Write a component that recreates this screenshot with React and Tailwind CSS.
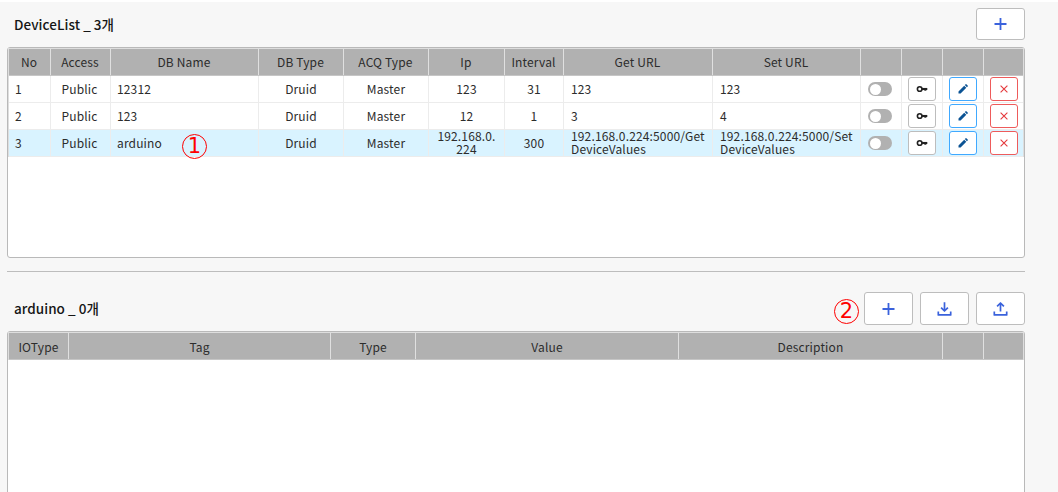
const COLS =
  "grid grid-cols-[42px_60px_148px_85px_85px_76px_59px_149px_148px_41px_41px_41px_39px]";
const TAG_COLS = "grid grid-cols-[60px_262px_85px_263px_264px_41px_39px]";

const devices = [
  { no: 1, name: "12312", ip: "123", interval: 31, get: "123", set: "123" },
  { no: 2, name: "123", ip: "12", interval: 1, get: "3", set: "4" },
  {
    no: 3,
    name: "arduino",
    ip: "192.168.0.224",
    interval: 300,
    get: "192.168.0.224:5000/GetDeviceValues",
    set: "192.168.0.224:5000/SetDeviceValues",
    selected: true,
  },
];

function PlusIcon() {
  return (
    <svg width="16" height="16" viewBox="0 0 16 16" fill="none" stroke="#3a62dc" strokeWidth="1.8">
      <path d="M7.5 2v12M1.5 8h12" />
    </svg>
  );
}

function DownloadIcon() {
  return (
    <svg width="16" height="16" viewBox="0 0 16 16" fill="none" stroke="#3a62dc" strokeWidth="1.7">
      <path d="M7.5 1.2v8.6M4.1 6.6L7.5 10l3.4-3.4M1.3 10.5v3.4h12.4v-3.4" strokeLinejoin="round" />
    </svg>
  );
}

function UploadIcon() {
  return (
    <svg width="16" height="16" viewBox="0 0 16 16" fill="none" stroke="#3a62dc" strokeWidth="1.7">
      <path d="M7.5 10.5V2M4.1 5.4L7.5 2l3.4 3.4M1.3 10.5v3.4h12.4v-3.4" strokeLinejoin="round" />
    </svg>
  );
}

function KeyIcon() {
  return (
    <svg width="12" height="8" viewBox="0 0 12 8" fill="none" stroke="#222">
      <circle cx="3.7" cy="4" r="2.3" strokeWidth="1.6" />
      <path d="M5.8 4H11.3" strokeWidth="2.1" />
      <path d="M9.3 4v1.7" strokeWidth="2" />
    </svg>
  );
}

function PencilIcon() {
  return (
    <svg width="10" height="10" viewBox="0 0 10 10" fill="#0b5394">
      <path d="M0.5 9.5V7.4L6.2 1.7L8.3 3.8L2.6 9.5ZM6.8 1.1L7.6 0.3Q8 0 8.4 0.3L9.7 1.6Q10 2 9.7 2.4L8.9 3.2Z" />
    </svg>
  );
}

function CloseIcon() {
  return (
    <svg width="8" height="8" viewBox="0 0 8 8" stroke="#e5393c" strokeWidth="1.1">
      <path d="M0.6 0.6l6.8 6.8M7.4 0.6L0.6 7.4" />
    </svg>
  );
}

function ToolButton({ height = "h-[33px]", children }) {
  return (
    <button
      className={`flex w-[49px] items-center justify-center rounded-[3px] border border-[#bdbdbd] bg-white ${height}`}
    >
      {children}
    </button>
  );
}

function RowButton({ color, children }) {
  return (
    <button
      className={`flex h-6 w-7 shrink-0 items-center justify-center rounded-[3px] border bg-white ${color}`}
    >
      {children}
    </button>
  );
}

function Head({ cols, labels, className = "" }) {
  return (
    <div className={`${cols} h-[27px] border-b border-[#c6c6c6] bg-[#b1b1b1]`}>
      {labels.map((label, i) => (
        <div
          key={i}
          className={`flex items-center justify-center border-r border-[#e0e0e0] last:border-r-0 ${className}`}
        >
          {label}
        </div>
      ))}
    </div>
  );
}

const ALIGN = {
  center: "justify-center px-[6px] pb-[2px] text-center",
  access: "justify-center pr-[2px] pb-[2px]",
  left: "justify-start pb-[2px] pl-[6px]",
  url: "justify-start pr-[5px] pb-[2px] pl-[7px]",
  control: "justify-center",
};

function Cell({ align = "center", children }) {
  return (
    <div
      className={`flex h-[27px] min-w-0 items-center border-r border-b border-[#ececec] leading-[13px] break-all last:border-r-0 ${ALIGN[align]}`}
    >
      {children}
    </div>
  );
}

function Marker({ children, className }) {
  return (
    <span
      className={`absolute flex h-[25px] w-[25px] items-center justify-center rounded-full border border-[#f00] font-['DejaVu_Sans',sans-serif] text-[21px] leading-none tracking-normal text-[#f00] ${className}`}
    >
      {children}
    </span>
  );
}

export default function App() {
  return (
    <main className="h-[492px] w-[1058px] overflow-hidden border-t-2 border-white bg-[#f7f7f7] pr-[33px] pl-[7px] font-['Noto_Sans_CJK_KR',sans-serif] text-[12px] tracking-[0.15px] text-[#2c2c2c]">
      <div className="mb-px flex h-[44px] items-center justify-between">
        <h1 className="pl-[7px] text-[13.5px] font-medium tracking-[0.05px] text-[#151515]">DeviceList _ 3개</h1>
        <ToolButton height="h-[32px]">
          <PlusIcon />
        </ToolButton>
      </div>

      <section className="h-[211px] rounded-[3px] border border-[#b9b9b9] bg-white">
        <div className="border-x border-t border-[#dedede]">
          <Head
            cols={COLS}
            labels={["No", "Access", "DB Name", "DB Type", "ACQ Type", "Ip", "Interval", "Get URL", "Set URL", "", "", "", ""]}
            className="pr-px pb-px"
          />
          {devices.map((d) => (
            <div key={d.no} className={`${COLS} ${d.selected ? "bg-[#d9f3ff]" : "bg-white"}`}>
              <Cell align="left">{d.no}</Cell>
              <Cell align="access">Public</Cell>
              <Cell align="left">
                <span className="relative">
                  {d.name}
                  {d.selected && <Marker className="top-[-2px] left-[65px]">1</Marker>}
                </span>
              </Cell>
              <Cell>Druid</Cell>
              <Cell>Master</Cell>
              <Cell>{d.ip}</Cell>
              <Cell>{d.interval}</Cell>
              <Cell align="url">{d.get}</Cell>
              <Cell align="url">{d.set}</Cell>
              <Cell align="control">
                <span className="mr-[2px] flex h-[14px] w-6 shrink-0 items-center rounded-full bg-[#b1b1b1] pl-[2px]">
                  <span className="h-[11px] w-[11px] rounded-full bg-white" />
                </span>
              </Cell>
              <Cell align="control">
                <RowButton color="border-[#bdbdbd]">
                  <KeyIcon />
                </RowButton>
              </Cell>
              <Cell align="control">
                <RowButton color="border-[#40a9ff]">
                  <PencilIcon />
                </RowButton>
              </Cell>
              <Cell align="control">
                <RowButton color="border-[#ee5b5b]">
                  <CloseIcon />
                </RowButton>
              </Cell>
            </div>
          ))}
        </div>
      </section>

      <hr className="mt-[13px] border-[#bdbdbd]" />

      <div className="flex h-[59px] items-center justify-between pt-[14px]">
        <h2 className="pl-[7px] text-[13.5px] font-medium tracking-[0.05px] text-[#151515]">arduino _ 0개</h2>
        <div className="relative flex gap-[7px]">
          <Marker className="top-[7px] left-[-30px]">2</Marker>
          <ToolButton>
            <PlusIcon />
          </ToolButton>
          <ToolButton>
            <DownloadIcon />
          </ToolButton>
          <ToolButton>
            <UploadIcon />
          </ToolButton>
        </div>
      </div>

      <section className="h-[200px] rounded-t-[3px] border border-[#b9b9b9] bg-white">
        <div className="border-x border-t border-[#dedede]">
          <Head
            cols={TAG_COLS}
            labels={["IOType", "Tag", "Type", "Value", "Description", "", ""]}
            className="pt-[2px]"
          />
        </div>
      </section>
    </main>
  );
}
